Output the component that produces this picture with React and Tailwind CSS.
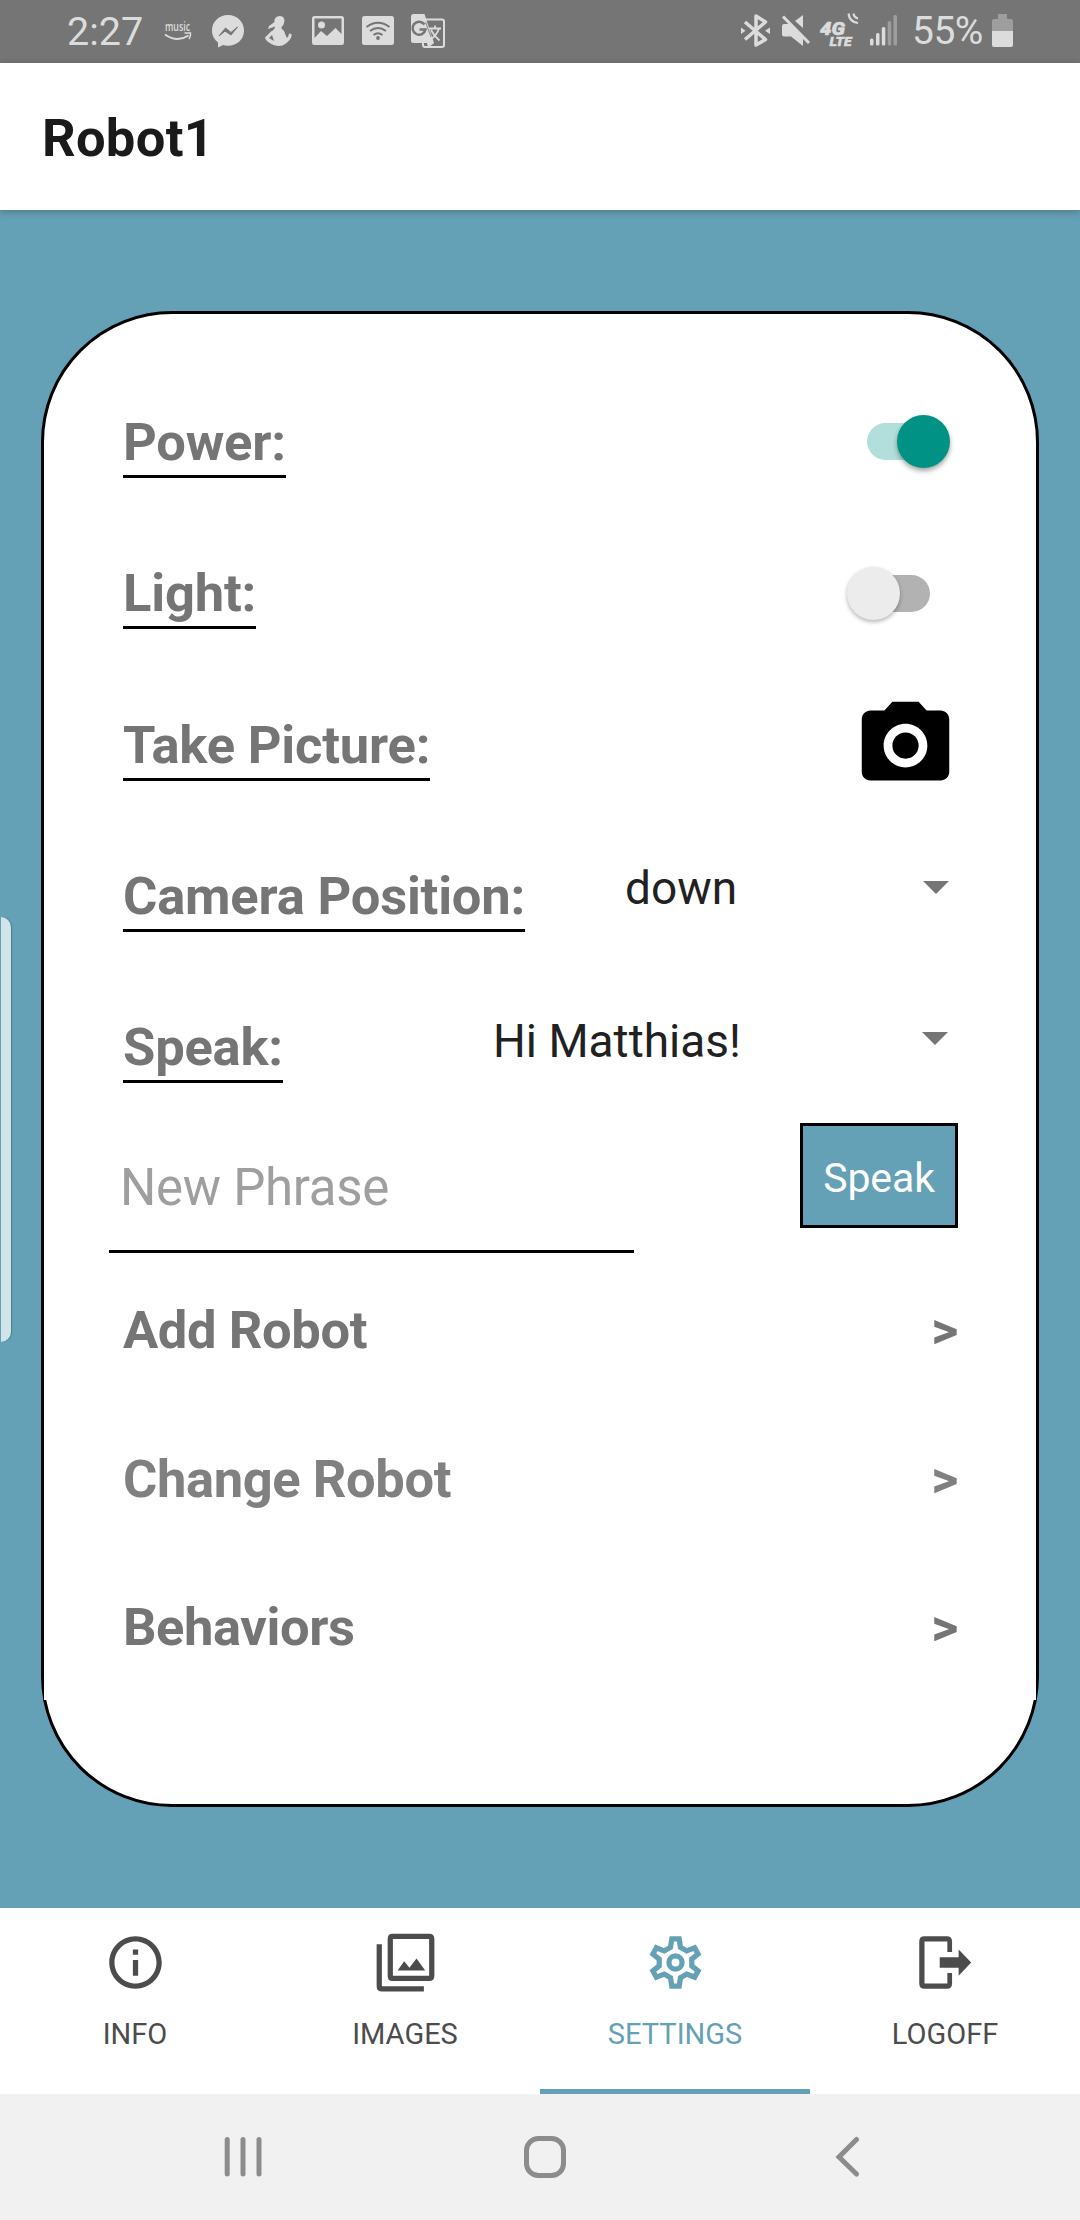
import React from "react";

const labelCls = "self-start whitespace-nowrap border-b-[3px] border-black pb-1 font-bold text-[#757575] text-[52.5px] leading-[58px] tracking-[-0.2px]";

function StatusIcons() {
  return (
    <svg width="300" height="63" viewBox="155 0 300 63" fill="#dcdcdc">
      <text x="165" y="31" fontSize="12.5" textLength="25" lengthAdjust="spacingAndGlyphs" fontFamily="'Open Sans'" fontWeight="600">music</text>
      <path d="M165 34.500Q177 43 188.500 35.500" fill="none" stroke="#dcdcdc" strokeWidth="2" />
      <path d="M184.500 33H190.500Q191 36 189 39" fill="none" stroke="#dcdcdc" strokeWidth="1.500" />
      <path d="M228 15C219 15 212 21.500 212 30.500C212 36 214.500 39.500 218 42.500V47.500L223 45Q225 45.700 228 45.700C237 45.700 244 39.500 244 30.500C244 21.500 237 15 228 15Z" />
      <path d="M219 36L225.500 28L231 32.500L237.500 27L231 35L225 31Z" fill="#757575" stroke="#757575" strokeWidth="1" />
      <path d="M280 16C276 16 274 19 274.500 22L269 26L268 29L275 26.500C275 29 273 30.500 271 31.500L265 37.500C265 41 273 46 279 46C284 46 287 43 290 39.500Q292 37 291.500 34L289 33.500Q289 36 287 38C285 35 285 31 282.500 29.500C281 28.500 281 27 283 25.500C286 20 284 16 280 16ZM272 35L274 41L269 38Z" fillRule="evenodd" />
      <path fillRule="evenodd" d="M314.500 16H341.500Q344 16 344 18.500V42.500Q344 45 341.500 45H314.500Q312 45 312 42.500V18.500Q312 16 314.500 16ZM314.500 18.500V38L321 31L327 36L335.500 28L341.500 34V18.500Z" />
      <circle cx="321.500" cy="25" r="3.500" />
      <rect x="362" y="16" width="32" height="29" rx="2.500" />
      <g fill="none" stroke="#757575" strokeWidth="2">
        <path d="M366.500 27Q378 18.500 389.500 27" />
        <path d="M370 31Q378 25 386 31" />
        <path d="M373.500 35Q378 31.500 382.500 35" />
      </g>
      <circle cx="378" cy="38" r="1.900" fill="#757575" />
      <rect x="423" y="19.500" width="21" height="27.500" rx="2" fill="none" stroke="#dcdcdc" strokeWidth="2" />
      <path d="M413.500 14H424.500L434 43L428 48L427 43H413.500Q411 43 411 40.500V16.500Q411 14 413.500 14Z" />
      <path d="M424.500 24.500A6.500 6.500 0 1 0 425.500 29.500H419.500" fill="none" stroke="#757575" strokeWidth="2.500" />
      <path d="M429 28.500H441M435 25.500V28.500M439 28.500Q437 35 430 40M431 30Q434 36 439.500 40.500" fill="none" stroke="#dcdcdc" strokeWidth="1.800" />
      <path d="M425.500 22L431 37" stroke="#757575" strokeWidth="0.800" />
    </svg>
  );
}

function SystemIcons() {
  return (
    <svg width="170" height="63" viewBox="735 0 170 63" fill="#dcdcdc">
      <path d="M745 22L765.500 39.500L756 45V16L765.500 22L745 39.500" fill="none" stroke="#dcdcdc" strokeWidth="3.500" strokeLinejoin="round" />
      <path d="M741 27.500L745.500 30.800L741 34ZM770 27.500L765 30.800L770 34Z" />
      <path d="M784 24H789L803 38V46L791 36.500H784Q782 36.500 782 34.500V26Q782 24 784 24ZM803 15V28L795 21Z" />
      <path d="M783 16.500L809 43" stroke="#dcdcdc" strokeWidth="3" />
      <text x="820" y="34.500" fontSize="18" fontWeight="900" fontStyle="italic" fontFamily="Roboto" textLength="25" lengthAdjust="spacingAndGlyphs" stroke="#dcdcdc" strokeWidth="0.600">4G</text>
      <text x="829.500" y="46" fontSize="13" fontWeight="900" fontStyle="italic" fontFamily="Roboto" textLength="22" lengthAdjust="spacingAndGlyphs" stroke="#dcdcdc" strokeWidth="0.500">LTE</text>
      <path d="M848.500 13.500Q849.500 22 858 23M853.500 13.500Q854 17.500 858 18.500" fill="none" stroke="#dcdcdc" strokeWidth="2.200" />
      <rect x="870" y="38.500" width="3.500" height="7" rx="1.500" />
      <rect x="876" y="33" width="3.500" height="12.500" rx="1.500" />
      <rect x="881.800" y="27" width="3.500" height="18.500" rx="1.500" />
      <rect x="887.700" y="21" width="3.500" height="24.500" rx="1.500" fill="#9e9e9e" />
      <rect x="893.500" y="15" width="3.500" height="30.500" rx="1.500" fill="#9e9e9e" />
    </svg>
  );
}

function StatusBar() {
  return (
    <div className="flex h-[63px] items-center bg-[#757575] pl-[67px] text-[#dcdcdc]">
      <span className="w-[88px] whitespace-nowrap text-[39.500px] leading-[65px]">2:27</span>
      <StatusIcons />
      <div className="ml-auto flex items-center pr-[67px]">
        <SystemIcons />
        <span className="ml-[7px] w-[80px] whitespace-nowrap text-[39px] leading-[65px] tracking-[-0.5px]">55%</span>
        <svg width="21" height="63" viewBox="992 0 21 63">
          <path d="M998 14H1007V19H1011Q1013 19 1013 21V31H992V21Q992 19 994 19H998Z" fill="#9e9e9e" />
          <path d="M992 31H1013V45Q1013 47 1011 47H994Q992 47 992 45Z" fill="#dcdcdc" />
        </svg>
      </div>
    </div>
  );
}

function Switch({ on }) {
  return on ? (
    <div className="mr-[8px] mt-[2px] flex h-[53px] w-[83px] items-center">
      <div className="h-[37px] w-[62px] rounded-full bg-[#b2dfdb]" />
      <div className="-ml-[32px] h-[53px] w-[53px] shrink-0 rounded-full bg-[#009385] shadow-[0_3px_5px_rgba(0,0,0,0.35)]" />
    </div>
  ) : (
    <div className="mr-[28px] mt-[3px] flex h-[53px] w-[83px] items-center">
      <div className="z-10 h-[53px] w-[53px] shrink-0 rounded-full bg-[#ececec] shadow-[0_2px_4px_rgba(0,0,0,0.3)]" />
      <div className="-ml-[32px] h-[37px] w-[62px] shrink-0 rounded-full bg-[#b2b2b2]" />
    </div>
  );
}

function Arrow() {
  return (
    <svg className="-mt-4" width="26" height="13" viewBox="0 0 26 13">
      <path d="M0 0H26L13 13Z" fill="#757575" />
    </svg>
  );
}

function LinkRow({ label, light }) {
  return (
    <div className={"flex h-[148.500px] items-start justify-between text-[52.5px] font-bold leading-[62px] tracking-[-0.4px] " + (light ? "text-[#808080]" : "text-[#757575]")}>
      <span>{label}</span>
      <span>&gt;</span>
    </div>
  );
}

function Tab({ label, active, children }) {
  return (
    <div className={"flex w-[270px] flex-col items-center pt-[23px] " + (active ? "border-b-[5px] border-[#65a1b6] text-[#65a1b6]" : "text-[#4c4c4c]")}>
      <svg width="63" height="63" viewBox="0 0 24 24" fill="currentColor">{children}</svg>
      <span className="mt-[23px] text-[29px] leading-[34px]">{label}</span>
    </div>
  );
}

export default function App() {
  return (
    <div className="flex h-[2220px] w-[1080px] flex-col overflow-hidden bg-white font-[Roboto,sans-serif]">
      <StatusBar />
      <header className="z-10 flex h-[147px] items-center bg-white pl-[42px] pt-[2px] shadow-[0_2px_8px_rgba(0,0,0,0.25)]">
        <h1 className="text-[52.5px] font-bold leading-[62px] tracking-[0.3px] text-[#1a1a1a]">Robot1</h1>
      </header>

      <main className="relative h-[1698px] bg-[#65a1b6] px-[41px] pt-[101px]">
        <div className="absolute left-[1px] top-[707px] h-[425px] w-[10px] rounded-r-[10px] bg-[#d0e4e9] shadow-[1px_0_1px_rgba(0,0,0,0.25)]" />
        <section className="h-[1496px] w-[998px] rounded-[131px] border-[3px] border-black bg-white pt-[99px]">
          <div className="h-[1287px] bg-[linear-gradient(transparent_40px,white_40px)] pl-[79px] pr-[78px]">
            <div className="flex h-[151px] justify-between">
              <span className={labelCls}>Power:</span>
              <Switch on />
            </div>
            <div className="flex h-[152px] justify-between">
              <span className={labelCls}>Light:</span>
              <Switch />
            </div>
            <div className="flex h-[151px] justify-between">
              <span className={labelCls}>Take Picture:</span>
              <svg className="-mt-[23px]" width="105" height="105" viewBox="0 0 24 24">
                <path d="M9 2L7.170 4H4c-1.100 0-2 .9-2 2v12c0 1.100.9 2 2 2h16c1.100 0 2-.9 2-2V6c0-1.100-.9-2-2-2h-3.170L15 2H9zm3 15c-2.760 0-5-2.240-5-5s2.240-5 5-5 5 2.240 5 5-2.240 5-5 5z" />
                <circle cx="12" cy="12" r="3" />
              </svg>
            </div>
            <div className="flex h-[151px]">
              <span className={labelCls}>Camera Position:</span>
              <div className="ml-auto flex h-[56px] items-center pr-[9px]">
                <span className="-mt-[14px] w-[298px] text-[46px] leading-[56px] text-[#212121]">down</span>
                <Arrow />
              </div>
            </div>
            <div className="flex h-[150px]">
              <span className={labelCls}>Speak:</span>
              <div className="ml-auto flex h-[56px] items-center pr-[10px]">
                <span className="-mt-[11px] w-[429px] text-[46px] leading-[56px] text-[#212121]">Hi Matthias!</span>
                <Arrow />
              </div>
            </div>
            <div className="-ml-[14px] flex h-[131px] items-start justify-between">
              <div className="mt-[-12px] h-[97px] w-[525px] border-b-[3px] border-black pl-[11px] pt-px text-[51px] leading-[62px] tracking-[-0.3px] text-[#9f9f9f]">New Phrase</div>
              <button className="-mt-[45px] h-[105px] w-[158px] border-[3px] border-black bg-[#65a1b6] pt-[5px] text-[41px] leading-[50px] tracking-[-0.1px] text-white">Speak</button>
            </div>
            <LinkRow label="Add Robot" />
            <LinkRow label="Change Robot" light />
            <LinkRow label="Behaviors" />
          </div>
        </section>
      </main>

      <nav className="flex h-[186px] bg-white">
        <Tab label="INFO">
          <path d="M11 7h2v2h-2zm0 4h2v6h-2zm1-9C6.480 2 2 6.480 2 12s4.480 10 10 10 10-4.480 10-10S17.520 2 12 2zm0 18c-4.410 0-8-3.590-8-8s3.590-8 8-8 8 3.590 8 8-3.590 8-8 8z" />
        </Tab>
        <Tab label="IMAGES">
          <path fillRule="evenodd" d="M7 1H21Q23 1 23 3V17Q23 19 21 19H7Q5.200 19 5.200 17V3Q5.200 1 7 1ZM7.200 3V17H21V3ZM9 15L11.500 11.500L13.500 14L16.200 10.500L19.500 15ZM1 5H3V21H19V23H3Q1 23 1 21Z" />
        </Tab>
        <Tab label="SETTINGS" active>
          <path
            d="M10.600 3H13.400L13.900 6.200L16.300 7.600L19.300 6.400L20.600 8.800L18.200 10.700V13.300L20.600 15.200L19.300 17.600L16.300 16.400L13.900 17.800L13.400 21H10.600L10.100 17.800L7.700 16.400L4.700 17.600L3.400 15.200L5.800 13.300V10.700L3.400 8.800L4.700 6.400L7.700 7.600L10.100 6.200Z"
            fill="none"
            stroke="currentColor"
            strokeWidth="2"
          />
          <circle cx="12" cy="12" r="2.500" fill="none" stroke="currentColor" strokeWidth="2" />
        </Tab>
        <Tab label="LOGOFF">
          <path d="M4 2H12.500Q14.500 2 14.500 4V8H12.700V4H4V20H12.700V16H14.500V20Q14.500 22 12.500 22H4Q2 22 2 20V4Q2 2 4 2ZM9.800 10H17V7L21.800 12L17 17V14H9.800Z" />
        </Tab>
      </nav>

      <div className="flex h-[126px] bg-[#f1f1f1] pl-[224px] pt-[42px]">
        <svg width="640" height="44" viewBox="224 2136 640 44" fill="none" stroke="#8c8c8c" strokeWidth="5" strokeLinecap="round">
          <path d="M227.200 2139.500V2174M243 2139.500V2174M259 2139.500V2174" />
          <rect x="526.500" y="2138.500" width="37" height="37" rx="12" />
          <path d="M856.500 2139.500L839 2157L856.500 2174" />
        </svg>
      </div>
    </div>
  );
}
